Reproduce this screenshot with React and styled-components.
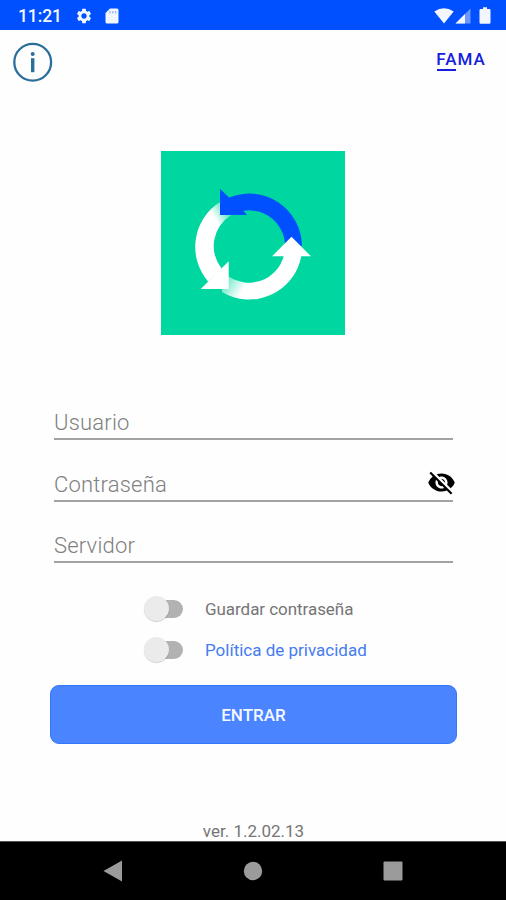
import React, { useState } from 'react'
import styled, { createGlobalStyle } from 'styled-components'
import { MdSettings, MdVisibilityOff } from 'react-icons/md'

const GlobalStyle = createGlobalStyle`
  body {
    margin: 0;
    background: #fefefe;
    font-family: Roboto, sans-serif;
  }
`

const Screen = styled.div`
  width: 506px;
  height: 900px;
  display: flex;
  flex-direction: column;
  overflow: hidden;
  background: #fefefe;
`

const StatusBar = styled.div`
  height: 30px;
  flex-shrink: 0;
  box-sizing: border-box;
  padding: 1px 15px 0 18px;
  display: flex;
  align-items: center;
  background: #0050ff;
  color: #f3f6ff;

  svg {
    display: block;
  }
`

const Clock = styled.span`
  width: 57px;
  font-size: 17.5px;
  font-weight: 500;
  letter-spacing: -0.1px;
`

const CardIcon = styled.svg`
  margin-left: 12px;
`

const SignalIcon = styled.svg`
  margin: 0 8px 0 1px;
`

const StatusRight = styled.div`
  margin-left: auto;
  display: flex;
  align-items: center;
`

const Header = styled.header`
  height: 121px;
  flex-shrink: 0;
  box-sizing: border-box;
  padding: 12px 20px 0 12px;
  display: flex;
  justify-content: space-between;
  align-items: flex-start;
`

const InfoButton = styled.button`
  padding: 0;
  border: none;
  background: none;
  display: block;
  cursor: pointer;

  svg {
    display: block;
  }
`

const Brand = styled.div`
  margin-top: 7px;
  color: #1420dc;
  font-size: 17px;
  line-height: 20px;
  font-weight: 500;
  letter-spacing: 1.1px;

  &::after {
    content: '';
    display: block;
    width: 19px;
    height: 2px;
    margin: 0 0 0 1px;
    background: #1420dc;
  }
`

const Logo = styled.svg`
  display: block;
  flex-shrink: 0;
  margin: 0 auto;
`

const Form = styled.form`
  margin: 66px 49px 0 50px;
  display: flex;
  flex-direction: column;
`

const Field = styled.label`
  height: 37px;
  margin: 0 4px 22.5px;
  border-bottom: 2px solid #a2a2a2;
  display: flex;
  align-items: center;

  svg {
    flex-shrink: 0;
    margin: 3px -3px 0 0;
    color: #000;
  }
`

const Input = styled.input`
  flex: 1;
  min-width: 0;
  padding: 6px 0 0;
  border: none;
  outline: none;
  background: none;
  font-family: inherit;
  font-size: 22px;
  font-weight: 300;
  letter-spacing: 0.2px;
  color: #333;

  &::placeholder {
    color: #808080;
    opacity: 1;
  }
`

const Options = styled.div`
  margin: 2.5px 0 0 94px;
  display: flex;
  flex-direction: column;
`

const Option = styled.div`
  height: 41px;
  display: flex;
  align-items: center;
  gap: 21px;
`

const Toggle = styled.button`
  width: 40px;
  height: 26px;
  padding: 0 1px 0 0;
  border: none;
  background: none;
  display: flex;
  align-items: center;
  flex-direction: ${(p) => (p.$on ? 'row-reverse' : 'row')};
  cursor: pointer;

  &::before {
    content: '';
    width: 25px;
    height: 25px;
    border-radius: 50%;
    background: #ebebeb;
    box-shadow: 0 1px 1px rgba(0, 0, 0, 0.18);
    z-index: 1;
  }

  &::after {
    content: '';
    width: 28px;
    height: 18px;
    margin: 0 -14px;
    border-radius: 9px;
    background: #b2b2b2;
  }
`

const OptionText = styled.span`
  font-size: 17px;
  letter-spacing: ${(p) => (p.$link ? '0' : '-0.05px')};
  color: ${(p) => (p.$link ? '#447cf0' : '#757575')};
`

const Submit = styled.button`
  height: 59px;
  margin-top: 15px;
  padding: 0;
  border: 1px solid #3377fb;
  border-radius: 9px;
  background: #4b84ff;
  color: #f5f8ff;
  font-family: inherit;
  font-size: 17px;
  font-weight: 500;
  cursor: pointer;
`

const Version = styled.div`
  margin-top: auto;
  padding-left: 1px;
  text-align: center;
  font-size: 17px;
  line-height: 20px;
  color: #757575;
`

const NavBar = styled.nav`
  height: 59px;
  flex-shrink: 0;
  box-sizing: border-box;
  border-top: 1px solid #555;
  display: flex;
  justify-content: center;
  align-items: center;
  gap: 120px;
  background: #000;

  svg {
    display: block;
    fill: #9b9b9b;
  }
`

const fields = ['Usuario', 'Contraseña', 'Servidor']

function RecycleLogo() {
  return (
    <Logo width="184" height="184" viewBox="0 0 184 184">
      <defs>
        <linearGradient id="fadeLeft" gradientUnits="userSpaceOnUse" x1="53" y1="66" x2="67" y2="58">
          <stop offset="0" stopColor="#fff" />
          <stop offset="1" stopColor="#fff" stopOpacity="0.3" />
        </linearGradient>
        <linearGradient id="fadeBottom" gradientUnits="userSpaceOnUse" x1="62" y1="131" x2="80" y2="142">
          <stop offset="0" stopColor="#fff" stopOpacity="0.4" />
          <stop offset="1" stopColor="#fff" />
        </linearGradient>
      </defs>
      <rect width="184" height="184" fill="#00d7a0" />
      <path
        d="M47.3 130.7A53 53 0 0 1 59 51L70 64.3A36 36 0 0 0 60.7 117.7Z"
        fill="url(#fadeLeft)"
      />
      <path
        d="M61 138V141A53 53 0 0 0 140.3 105.3V104H122.7V105.3A36 36 0 0 1 67.7 125.4Z"
        fill="url(#fadeBottom)"
      />
      <path d="M39.7 138L67.7 138V110.3Z" fill="#fff" />
      <path
        d="M59 37.7L68 46.5A53 53 0 0 1 141 94.5L136 98H124A36 36 0 0 0 82.3 59.8L86 64H59Z"
        fill="#0050ff"
      />
      <path d="M130.5 85.7L150 105.3H111Z" fill="#fff" />
    </Logo>
  )
}

export default function App() {
  const [save, setSave] = useState(false)
  const [privacy, setPrivacy] = useState(false)

  return (
    <Screen>
      <GlobalStyle />
      <StatusBar>
        <Clock>11:21</Clock>
        <MdSettings size={18} />
        <CardIcon width="14" height="16" viewBox="0 0 14 16">
          <path d="M5 .5H12Q13.5.5 13.5 2V14Q13.5 15.5 12 15.5H2Q.5 15.5.5 14V5Z" fill="currentColor" />
          <path d="M5 3V5.5M7.8 3V5.5M10.6 3V5.5" stroke="#8fb0ff" strokeWidth="1.2" />
        </CardIcon>
        <StatusRight>
          <svg width="20" height="16" viewBox="0 0 20 16">
            <path d="M.3 3.6Q10-3 19.7 3.6L10 15.5Z" fill="currentColor" />
          </svg>
          <SignalIcon width="16" height="16" viewBox="0 0 16 16">
            <path d="M15.5.5V15.5H.5Z" fill="#6d97ff" />
            <path d="M10 6V15.5H.5Z" fill="currentColor" />
          </SignalIcon>
          <svg width="12" height="17" viewBox="0 0 12 17">
            <path d="M4 .3H8V2H10.3Q11.5 2 11.5 3.2V15.5Q11.5 16.7 10.3 16.7H1.7Q.5 16.7.5 15.5V3.2Q.5 2 1.7 2H4Z" fill="currentColor" />
          </svg>
        </StatusRight>
      </StatusBar>

      <Header>
        <InfoButton aria-label="info">
          <svg width="41" height="41" viewBox="0 0 41 41">
            <circle cx="20.7" cy="20.2" r="18.4" fill="none" stroke="#2a6f9c" strokeWidth="2.3" />
            <circle cx="20.7" cy="12" r="2" fill="#2a6f9c" />
            <rect x="19" y="16.2" width="3.4" height="14" fill="#2a6f9c" />
          </svg>
        </InfoButton>
        <Brand>FAMA</Brand>
      </Header>

      <RecycleLogo />

      <Form onSubmit={(e) => e.preventDefault()}>
        {fields.map((name) => (
          <Field key={name}>
            <Input placeholder={name} type={name === 'Contraseña' ? 'password' : 'text'} />
            {name === 'Contraseña' && <MdVisibilityOff size={29} />}
          </Field>
        ))}
        <Options>
          <Option>
            <Toggle type="button" $on={save} onClick={() => setSave(!save)} />
            <OptionText>Guardar contraseña</OptionText>
          </Option>
          <Option>
            <Toggle type="button" $on={privacy} onClick={() => setPrivacy(!privacy)} />
            <OptionText $link>Política de privacidad</OptionText>
          </Option>
        </Options>
        <Submit type="submit">ENTRAR</Submit>
      </Form>

      <Version>ver. 1.2.02.13</Version>

      <NavBar>
        <svg width="20" height="22" viewBox="0 0 20 22">
          <path d="M.5 11L19 .5V21.5Z" />
        </svg>
        <svg width="20" height="20" viewBox="0 0 20 20">
          <circle cx="10" cy="10" r="9.2" />
        </svg>
        <svg width="20" height="20" viewBox="0 0 20 20">
          <rect x=".5" y=".5" width="19" height="19" rx="1" />
        </svg>
      </NavBar>
    </Screen>
  )
}
